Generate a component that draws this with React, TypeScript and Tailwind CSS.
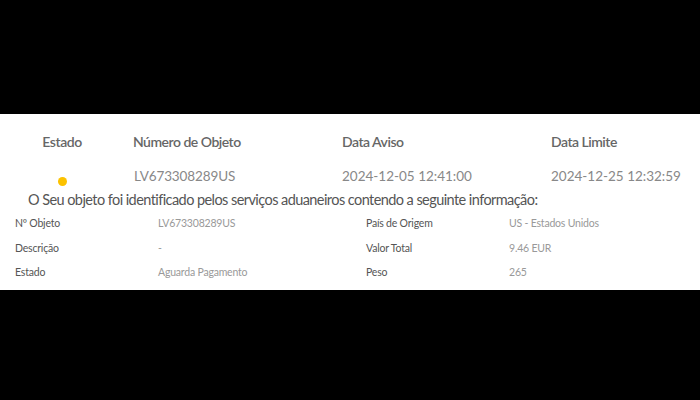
export default function App() {
  const font = { fontFamily: 'Lato, "Open Sans", sans-serif' };
  return (
    <div className="w-[700px] h-[400px] bg-black flex flex-col" style={font}>
      <div className="h-[114px]" />
      <div className="h-[176px] bg-white flex flex-col">
        <div className="grid grid-cols-[124px_209px_209px_1fr] h-[46px] items-end pb-[8px]">
          <div className="text-center text-[14px] font-semibold text-[#666] leading-[20px] tracking-[-0.4px]">Estado</div>
          <div className="pl-[9px] text-[14px] font-semibold text-[#666] leading-[20px] tracking-[-0.5px]">Número de Objeto</div>
          <div className="pl-[9px] text-[14px] font-semibold text-[#666] leading-[20px] tracking-[-0.5px]">Data Aviso</div>
          <div className="pl-[9px] text-[14px] font-semibold text-[#666] leading-[20px] tracking-[-0.5px]">Data Limite</div>
        </div>
        <div className="grid grid-cols-[124px_209px_209px_1fr] h-[30px] items-center pt-[3px]">
          <div className="flex justify-center pt-[9px]">
            <div className="w-[9px] h-[9px] rounded-full bg-[#fcc200]" />
          </div>
          <div className="pl-[10px] text-[13.5px] text-[#888] tracking-[-0.1px]">LV673308289US</div>
          <div className="pl-[9px] text-[13.5px] text-[#888]">2024-12-05 12:41:00</div>
          <div className="pl-[9px] text-[13.5px] text-[#888]">2024-12-25 12:32:59</div>
        </div>
        <div className="pl-[28px] text-[14.5px] text-[#555] leading-[20px] tracking-[-0.57px]">
          O Seu objeto foi identificado pelos serviços aduaneiros contendo a seguinte informação:
        </div>
        <div className="grid grid-cols-[143px_208px_143px_1fr] mt-[1px] px-[15px] text-[10.5px] leading-[24.5px] tracking-[-0.2px]">
          <div className="text-[#555]">Nº Objeto</div>
          <div className="text-[#999]">LV673308289US</div>
          <div className="text-[#555]">País de Origem</div>
          <div className="text-[#999]">US - Estados Unidos</div>
          <div className="text-[#555]">Descrição</div>
          <div className="text-[#999]">-</div>
          <div className="text-[#555]">Valor Total</div>
          <div className="text-[#999]">9.46 EUR</div>
          <div className="text-[#555]">Estado</div>
          <div className="text-[#999]">Aguarda Pagamento</div>
          <div className="text-[#555]">Peso</div>
          <div className="text-[#999]">265</div>
        </div>
      </div>
    </div>
  );
}
